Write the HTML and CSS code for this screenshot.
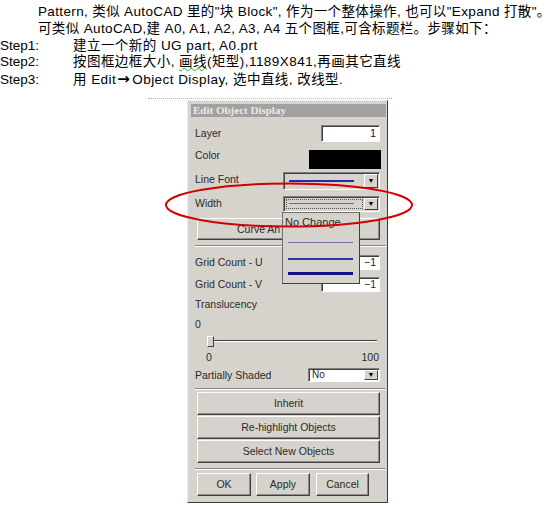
FILE: index.html
```html
<!DOCTYPE html>
<html lang="zh">
<head>
    <meta charset="UTF-8">
    <title>Edit Object Display</title>
    <link rel="stylesheet" href="styles.css">
</head>
<body>
    <div class="notes">
        <p class="lead">Pattern, 类似 AutoCAD 里的"块 Block", 作为一个整体操作, 也可以"Expand 打散"。</p>
        <p class="lead">可类似 AutoCAD,建 A0, A1, A2, A3, A4 五个图框,可含标题栏。步骤如下：</p>
        <p class="step"><span class="step-no">Step1:</span>建立一个新的 UG part, A0.prt</p>
        <p class="step"><span class="step-no">Step2:</span>按图框边框大小, <span class="spell">画线</span>(矩型),1189X841,再画其它直线</p>
        <p class="step"><span class="step-no">Step3:</span>用 Edit<b class="arrow">→</b>Object Display, 选中直线, 改线型.</p>
    </div>
    <div class="rule"></div>

    <div class="dialog">
        <div class="title">Edit Object Display</div>

        <div class="row row-layer">
            <span class="lbl">Layer</span>
            <span class="field field-layer">1</span>
        </div>
        <div class="row row-color">
            <span class="lbl">Color</span>
            <span class="swatch"></span>
        </div>
        <div class="row row-font">
            <span class="lbl">Line Font</span>
            <span class="combo combo-line">
                <span class="combo-value"><i class="ln ln-font"></i></span>
                <span class="combo-btn">▼</span>
            </span>
        </div>
        <div class="row row-width">
            <span class="lbl">Width</span>
            <span class="combo combo-width">
                <span class="combo-value focus"><i class="ln ln-thin"></i></span>
                <span class="combo-btn">▼</span>
            </span>
        </div>
        <div class="btn btn-wide btn-curve"><span class="cut">Curve An</span></div>
        <div class="sep sep-1"></div>

        <div class="row row-grid-u">
            <span class="lbl">Grid Count - U</span>
            <span class="field field-grid">−1</span>
        </div>
        <div class="row row-grid-v">
            <span class="lbl">Grid Count - V</span>
            <span class="field field-grid">−1</span>
        </div>
        <div class="line-lbl trans">Translucency</div>
        <div class="line-lbl value">0</div>
        <div class="slider"><span class="thumb"></span></div>
        <div class="scale"><span>0</span><span>100</span></div>

        <div class="row row-shaded">
            <span class="lbl">Partially Shaded</span>
            <span class="combo combo-no">
                <span class="combo-value">No</span>
                <span class="combo-btn">▼</span>
            </span>
        </div>
        <div class="sep sep-2"></div>
        <div class="btn btn-wide btn-first">Inherit</div>
        <div class="btn btn-wide">Re-highlight Objects</div>
        <div class="btn btn-wide">Select New Objects</div>
        <div class="sep sep-3"></div>
        <div class="actions">
            <div class="btn btn-ok">OK</div>
            <div class="btn btn-apply">Apply</div>
            <div class="btn btn-cancel">Cancel</div>
        </div>

        <!-- open width list -->
        <div class="droplist">
            <div class="opt-text">No Change</div>
            <i class="ln opt opt-1"></i>
            <i class="ln opt opt-2"></i>
            <i class="ln opt opt-3"></i>
        </div>
    </div>

    <svg class="mark" width="252" height="48" viewBox="0 0 252 48">
        <ellipse cx="125" cy="24" rx="123" ry="21.5" fill="none" stroke="#d40000" stroke-width="2"/>
    </svg>
</body>
</html>
```

FILE: styles.css
```css
body {
    margin: 0;
    position: relative;
    background-color: #fff;
    color: #000;
    font-family: "Liberation Sans", "Noto Sans CJK SC", sans-serif;
    font-size: 13.5px;
}
p {
    margin: 0;
    line-height: 16.8px;
    white-space: nowrap;
    letter-spacing: 0.45px;
}
.notes {
    padding-top: 4px;
}
.lead {
    padding-left: 38px;
    letter-spacing: 0.36px;
}
.step-no {
    display: inline-block;
    width: 73px;
    letter-spacing: 0;
}
.spell {
    text-decoration: underline wavy #3a9a3a;
    text-decoration-thickness: 1px;
}
.arrow {
    font-family: "DejaVu Sans", sans-serif;
    font-size: 15px;
    margin: 0 2px 0 1px;
}
.rule {
    margin: 9px 0 0 148px;
    width: 244px;
    border-top: 1px dotted #b0b0b0;
    height: 1px;
}

/* dialog */
.dialog {
    position: relative;
    box-sizing: border-box;
    margin: 0 0 0 187px;
    width: 201px;
    height: 403px;
    padding: 3px 1px 0 3px;
    background-color: #d6d3cc;
    border: 1px solid;
    border-color: #ececec #3c3c3c #3c3c3c #ececec;
    font-family: "Liberation Sans", sans-serif;
    font-size: 10.5px;
    color: #2a2a2a;
}
.title {
    height: 13px;
    line-height: 13px;
    padding-left: 2px;
    background-color: #a3a1a0;
    color: #ebe9e6;
    font-family: "Liberation Serif", serif;
    font-weight: bold;
    font-size: 11px;
}
.row {
    display: flex;
    justify-content: space-between;
    align-items: center;
    padding: 0 6px 0 4px;
}
.lbl {
    line-height: 14px;
}
.row-layer { margin-top: 8px; height: 17px; }
.row-color { margin-top: 6px; height: 19px; align-items: flex-start; }
.row-font { margin-top: 5px; height: 18px; align-items: flex-start; }
.row-width { margin-top: 6px; height: 16px; align-items: flex-start; }
.row-grid-u { margin-top: 8px; height: 15px; }
.row-grid-v { margin-top: 7px; height: 15px; }
.row-shaded { margin-top: 4px; height: 14px; }

.field {
    box-sizing: border-box;
    background-color: #fff;
    border: 1px solid;
    border-color: #808080 #fff #fff #808080;
    box-shadow: inset 1px 1px 0 #404040;
    text-align: right;
    padding-right: 3px;
    color: #222;
}
.field-layer {
    width: 59px;
    height: 17px;
    line-height: 15px;
    font-size: 11px;
}
.field-grid {
    width: 59px;
    height: 15px;
    line-height: 13px;
}
.swatch {
    width: 72px;
    height: 19px;
    margin-top: 2px;
    background-color: #000;
    margin-right: -1px;
}

.combo {
    display: flex;
    box-sizing: border-box;
    border: 1px solid;
    border-color: #808080 #fff #fff #808080;
    box-shadow: inset 1px 1px 0 #404040;
    padding: 1px;
}
.combo-line { width: 97px; height: 18px; background-color: #d6d3cc; }
.combo-width { width: 97px; height: 16px; background-color: #d6d3cc; }
.combo-no { width: 72px; height: 14px; background-color: #fff; }
.combo-value {
    flex: 1;
    display: flex;
    align-items: center;
    padding-left: 4px;
}
.combo-no .combo-value {
    padding-left: 2px;
    font-size: 10px;
}
.combo-value.focus {
    outline: 1px dotted #555;
    outline-offset: -2px;
}
.combo-btn {
    width: 14px;
    box-sizing: border-box;
    background-color: #d6d3cc;
    border: 1px solid;
    border-color: #fff #404040 #404040 #fff;
    font-size: 7px;
    line-height: 10px;
    display: flex;
    align-items: center;
    justify-content: center;
    color: #000;
}
.ln {
    display: block;
    width: 65px;
}
.ln-font { height: 2px; background-color: #2a2aa8; }
.ln-thin { height: 1px; background-color: #6464b4; }

.btn {
    box-sizing: border-box;
    height: 22px;
    line-height: 20px;
    text-align: center;
    border: 1px solid;
    border-color: #fff #404040 #404040 #fff;
    box-shadow: inset -1px -1px 0 #8a8a8a;
}
.btn-wide {
    margin: 1px 6px 0 6px;
    height: 23px;
}
.btn-curve {
    margin-top: 6px;
    height: 22px;
    text-align: left;
    padding-left: 39px;
}
.btn-first { margin-top: 2px; }
.sep {
    height: 0;
    border-top: 1px solid #8a8a8a;
    border-bottom: 1px solid #fff;
    margin-left: 4px;
}
.sep-1 { margin-top: 5px; }
.sep-2 { margin-top: 6px; }
.sep-3 { margin-top: 5px; }

.line-lbl {
    padding-left: 4px;
    line-height: 14px;
}
.trans { margin-top: 5px; }
.value { margin-top: 6px; }
.slider {
    position: relative;
    margin: 5px 0 0 16px;
    width: 170px;
    height: 10px;
}
.slider::before {
    content: "";
    position: absolute;
    left: 0;
    right: 0;
    top: 4px;
    border-top: 1px solid #404040;
    border-bottom: 1px solid #fff;
}
.thumb {
    position: absolute;
    left: 0;
    top: 0;
    width: 5px;
    height: 9px;
    background-color: #d6d3cc;
    border: 1px solid;
    border-color: #fff #404040 #404040 #fff;
}
.scale {
    display: flex;
    justify-content: space-between;
    margin: 4px 7px 0 15px;
    line-height: 14px;
}

.actions {
    display: flex;
    gap: 5px;
    margin: 3px 0 0 6px;
}
.actions .btn {
    height: 23px;
    line-height: 21px;
    width: 54px;
}
.actions .btn-cancel {
    width: 53px;
    margin-left: 1px;
}

.droplist {
    position: absolute;
    left: 94px;
    top: 111px;
    box-sizing: border-box;
    width: 78px;
    height: 72px;
    background-color: #d6d3cc;
    border: 1px solid;
    border-color: #707070 #404040 #404040 #707070;
    padding-left: 5px;
}
.opt-text {
    margin: 3px 0 0 -3px;
    line-height: 13px;
    font-size: 11px;
}
.opt-1 { margin-top: 13px; height: 1px; background-color: #7070b0; }
.opt-2 { margin-top: 15px; height: 2px; background-color: #3030a0; }
.opt-3 { margin-top: 12px; height: 3px; background-color: #10108a; }

.mark {
    position: absolute;
    left: 164px;
    top: 181px;
}
```
